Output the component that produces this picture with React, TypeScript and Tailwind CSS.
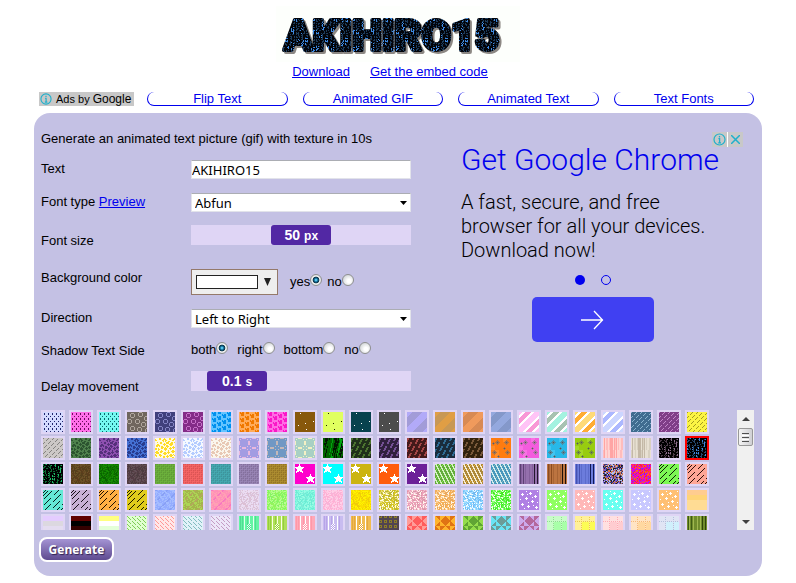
import React, { useState } from "react";
import clsx from "clsx";

type PixelFn = (x: number, y: number) => number;

// stable pseudo random value between 0 and 1
const noise = (x: number, y: number, seed = 1) => {
  const n = Math.sin(x * 127.1 + y * 311.7 + seed * 74.7) * 43758.5453;
  return n - Math.floor(n);
};

const mod = (a: number, b: number) => ((a % b) + b) % b;

const near = (points: number[][], x: number, y: number, test: (dx: number, dy: number) => boolean) =>
  points.some(([px, py]) => test(Math.abs(x - px), Math.abs(y - py)));

const RINGS = [[5, 3], [13, 2], [19, 6], [2, 9], [10, 9], [16, 12], [5, 16], [12, 17], [20, 18]];
const SPECKS = [[5, 1], [18, 9], [3, 13], [10, 11], [11, 17]];
const HOLES = [[6, 4, 2], [15, 4, 2], [2, 5, 1], [3, 14, 2], [13, 10, 1], [16, 14, 2], [7, 18, 1]];
const PLUSES = [[3, 4], [11, 3], [16, 6], [7, 8], [13, 11], [3, 14], [9, 16], [17, 17]];

const FLOWER = [
  "....##...#....##...#",
  "#...##..###...##..##",
  "##.....##.##.....##.",
  "........#.#..##.....",
  "..#..##....###..##.#",
  ".....##..#.###.###..",
  "..##....###...####..",
  ".####....#.##..##...",
  ".##.#.##...###....#.",
  "......###.#.#..#.###",
  "##.#..##.###..###.#.",
  "##.##....###...#....",
  "...#..#...#..#...##.",
  ".##..###.....#..####",
  "####.##..##.###..##.",
  ".###....####.#......",
  "#...##...##....##.#.",
  "##..###.....#.####.#",
  ".#...#..##.###.##...",
  "........##..#....##.",
];

const MATRIX = [
  "#.##..#.....#.......",
  "#......##..##....##.",
  ".##..#.#....#..#....",
  "##....##.......#.#..",
  "#..##..#..#.#..#.##.",
  "........#.#....###..",
  "#.#.....#....#...#..",
  "###..#.##.##.....#..",
  "#.#...#.......#.##..",
  "..#..##...##........",
  "#..#..#....#..##..#.",
  "##.#.##..#.....#..#.",
  "......#..###..##....",
  "#.#..##........#..#.",
  "#..#...#.#.#.....##.",
  "##....##.###..#.....",
  "......#....#..##..#.",
  "#.##.#.#.#....#..##.",
  "..#...#..##..##.....",
  "#....##...#...#..#..",
];

const STAR = [
  "....#....",
  "....#....",
  "...###...",
  "#########",
  ".#######.",
  "..#####..",
  "..#####..",
  ".###.###.",
  ".#.....#.",
];

const starAt = (x: number, y: number) => STAR[y]?.[x] === "#";

const PATTERNS: Record<string, PixelFn> = {
  dots: (x, y) => {
    const row = y % 5;
    if (row === 1 || row === 2) return x % 4 === 1 ? 1 : 0;
    return row === 4 && x % 4 === 3 ? 1 : 0;
  },
  rings: (x, y) => (near(RINGS, x, y, (dx, dy) => (dx === 2 && dy < 2) || (dy === 2 && dx < 2)) ? 1 : 0),
  blocks: (x, y) => {
    const col = Math.floor(x / 5);
    const row = mod(y + col * 2, 6);
    return row < 4 && x % 5 > 1 ? (row === 0 && x % 5 === 2 ? 0 : 1) : x % 5 === 1 && row < 2 ? 1 : 0;
  },
  specks: (x, y) => (near(SPECKS, x, y, (dx, dy) => dx + dy === 0) ? 1 : 0),
  bands: (x, y) => (mod(x + y + 5, 20) < 10 ? 0 : 1),
  candy: (x, y) => {
    const d = mod(x + y + 2, 20);
    return d < 5 ? 0 : d < 8 ? 2 : d < 14 ? 1 : d < 17 ? 2 : 0;
  },
  dashes: (x, y) => (mod(x + y, 5) === 0 && mod(x - y, 8) < 6 ? 1 : 0),
  flowers: (x, y) => (FLOWER[y][x] === "#" ? 1 : 0),
  circles: (x, y) => {
    const dx = mod(x, 10) - 4.5;
    const dy = mod(y, 10) - 4.5;
    const d = Math.sqrt(dx * dx + dy * dy);
    return d > 4.4 && d < 5.1 ? 1 : 0;
  },
  grass: (x, y) => {
    const n = noise(x + Math.floor(y / 5), Math.floor((y + x * 3) / 5));
    return n > 0.8 ? 2 : n > 0.35 ? 1 : 0;
  },
  bamboo: (x, y) => {
    const d = x + Math.floor(y / 2);
    return mod(d, 5) < 2 && mod(y + Math.floor(d / 5) * 3, 7) < 5 ? 1 : 0;
  },
  holes: (x, y) => {
    const hit = HOLES.find(([hx, hy, r]) => Math.abs(x - hx) + Math.abs(y - hy) <= r);
    if (!hit) return noise(Math.floor(x / 4), Math.floor(y / 4)) > 0.7 ? 3 : 0;
    return x === hit[0] && y === hit[1] ? 2 : 1;
  },
  curtain: (x, y) => (noise(x, 3) > 0.72 ? 1 : noise(x, Math.floor(y / 12)) > 0.5 ? 2 : 0),
  matrix: (x, y) => (MATRIX[y][x] === "#" ? (noise(x, Math.floor(y / 4)) > 0.7 ? 2 : 1) : 0),
  grain: (x, y) => Math.floor(noise(x, y) * 4),
  weave: (x, y) => ((x + y) % 2 === 0 && y % 2 === 0 ? 1 : (x + y) % 4 === 1 ? 2 : 0),
  stars: (x, y) => (starAt(x, y) || starAt(x - 11, y - 10) ? 1 : 0),
  mesh: (x, y) => {
    const d = mod(x * 2 - y, 8);
    return mod(y, 5) === 4 && d > 4 ? 0 : d < 3 ? 1 : d === 5 && mod(y, 4) < 2 ? 2 : 0;
  },
  bars: (x) => {
    if ([15, 18].includes(x)) return 2;
    return [1, 4].includes(x) ? 1 : [2, 6, 10, 13].includes(x) ? 3 : 0;
  },
  confetti: (x, y) => Math.floor(noise(x, y, 5) * 5),
  slashes: (x, y) => {
    const d = x + y;
    if (d < 6) return d % 3 === 2 && x < 5 ? 1 : 0;
    if (d > 35) return d % 2 ? 1 : 0;
    const k = Math.floor(d / 6);
    return d % 6 === 3 && mod(x - y + k * 7, 20) < 15 ? 1 : 0;
  },
  brush: (x, y) => {
    const d = mod(x - y + Math.floor(noise(y, 2) * 3), 9);
    const e = mod(x + y, 11);
    return d < 2 ? 1 : e < 2 ? 2 : noise(x, y) > 0.7 ? 1 : 0;
  },
  speckle: (x, y) => {
    const n = noise(x, y, 3);
    return n > 0.78 ? 3 : n > 0.5 ? 2 : n > 0.3 ? 1 : 0;
  },
  pluses: (x, y) => {
    if (near(PLUSES, x, y, (dx, dy) => dx + dy <= 1)) return 1;
    return near([[7, 1], [1, 9], [9, 12], [18, 1], [18, 12], [13, 7], [5, 18], [14, 15], [8, 4]], x, y, (dx, dy) => dx === dy && dx < 1) ? 1 : 0;
  },
  layers: (_x, y) => Math.min(Math.floor(y / 5), 2),
  stitch: (x, y) => (mod(x - y, 4) === 0 && mod(x, 5) !== 4 ? 1 : 0),
  ribbons: (x, y) => {
    if (y > 7 && x > 7 && x < 12) return (x + y) % 2 ? 1 : 2;
    return [5, 10, 14].includes(x) ? 1 : [1, 3, 8, 16].includes(x) ? 2 : 0;
  },
  lace: (x, y) => ((x * x + y * y + x * 3) % 5 < 2 ? 1 : 0),
  pinwheel: (x, y) => {
    const px = x % 10;
    const py = y % 10;
    const flip = (Math.floor(x / 10) + Math.floor(y / 10)) % 2;
    return (px > py ? 1 : 0) ^ (px + py > 9 ? 1 : 0) ^ flip ^ (px > 4 ? 1 : 0);
  },
  plaid: (x, y) => {
    if (x === 6 || x === 14 || y === 5) return (x + y) % 2 ? 2 : 0;
    return x > 6 && y > 5 ? 1 : 0;
  },
};

type Texture = [kind: string, ...colors: string[]];

const TEXTURES: Texture[] = [
  ["dots", "#d4daff", "#20246c"],
  ["dots", "#ff6fe9", "#6c0c5c"],
  ["dots", "#74f8f0", "#08686c"],
  ["rings", "#70665e", "#b0a69e"],
  ["rings", "#40407c", "#8484c4"],
  ["rings", "#842c88", "#c670c8"],
  ["blocks", "#64c4ff", "#0090ee"],
  ["blocks", "#ffac5c", "#f07800"],
  ["blocks", "#ff6ce4", "#fa18c8"],
  ["specks", "#88580c", "#ffffff"],
  ["specks", "#e0ff60", "#202000"],
  ["specks", "#08424e", "#ffffff"],
  ["specks", "#4c4c4c", "#ffffff"],
  ["bands", "#b2aaf8", "#a29cd8"],
  ["bands", "#e09e44", "#c89854"],
  ["bands", "#f09a5c", "#d88a54"],
  ["bands", "#94a8de", "#8498ca"],
  ["candy", "#ffc4f6", "#f898d6", "#ffffff"],
  ["candy", "#a4f2e0", "#a8c2b2", "#ffffff"],
  ["candy", "#ffda78", "#ffac34", "#ffffff"],
  ["candy", "#ccd6ff", "#acb8ff", "#ffffff"],
  ["dashes", "#406c90", "#8cb4d0"],
  ["dashes", "#803e88", "#c486ca"],
  ["dashes", "#fcf444", "#a49c20"],

  ["dashes", "#ccc8c6", "#848280"],
  ["flowers", "#4e804c", "#2c5430"],
  ["flowers", "#8e50b0", "#54307a"],
  ["flowers", "#4470d4", "#283c90"],
  ["flowers", "#fffae0", "#ffdc24"],
  ["flowers", "#f4f8ff", "#b4ccff"],
  ["flowers", "#faf6ec", "#e8c8b4"],
  ["circles", "#a29ce2", "#eab8de"],
  ["circles", "#7098c4", "#c4b8b8"],
  ["circles", "#a8d0c4", "#f4f0c4"],
  ["grass", "#021602", "#006400", "#00a410"],
  ["bamboo", "#20301a", "#4c7430"],
  ["bamboo", "#30203e", "#745094"],
  ["bamboo", "#441a1a", "#a44646"],
  ["bamboo", "#1a2c3c", "#306c94"],
  ["bamboo", "#32220e", "#78583a"],
  ["holes", "#ff7c10", "#a8744c", "#5c5c64", "#ff8c28"],
  ["holes", "#f45cde", "#b070a4", "#54545c", "#fa70e4"],
  ["holes", "#28b8e8", "#508ca0", "#54545c", "#40c4f0"],
  ["holes", "#98cc10", "#789838", "#54545c", "#a4d828"],
  ["curtain", "#ffd4d2", "#ffa4a4", "#ffbcbc"],
  ["curtain", "#e8e0d2", "#c4b8a6", "#d8d0c0"],
  ["matrix", "#000000", "#4c3c48", "#8c6c8c"],
  ["matrix", "#000000", "#24486c", "#3c84dc"],

  ["matrix", "#000000", "#0c6c34", "#20b468"],
  ["grain", "#644a22", "#54401c", "#6c5228", "#5c3c1c"],
  ["grain", "#108000", "#107000", "#188c04", "#086400"],
  ["grain", "#5c484c", "#4c3c40", "#645058", "#543c44"],
  ["weave", "#6cb03c", "#609c34", "#64a438"],
  ["weave", "#f46464", "#dc5454", "#e85c5c"],
  ["weave", "#44a8b0", "#3c949c", "#409ca4"],
  ["weave", "#9884b4", "#84709c", "#8c78a8"],
  ["weave", "#ac8c30", "#947424", "#a0802c"],
  ["stars", "#ff00cc", "#ffffff"],
  ["stars", "#00ffff", "#ffffff"],
  ["stars", "#ccb410", "#ffffff"],
  ["stars", "#ff5c0c", "#ffffff"],
  ["stars", "#6c2098", "#ffffff"],
  ["mesh", "#64ac3c", "#d4f4c0", "#84ec4c"],
  ["mesh", "#ac8838", "#f8ecd0", "#ecb040"],
  ["mesh", "#4898bc", "#d4ecec", "#88b4bc"],
  ["bars", "#9470ac", "#5c4074", "#241830", "#84609c"],
  ["bars", "#bc7440", "#8c4c20", "#201008", "#a86434"],
  ["bars", "#6c7cdc", "#4450b0", "#101858", "#5c6ccc"],
  ["confetti", "#383878", "#d87848", "#7858d0", "#b8c0e0", "#202020"],
  ["confetti", "#ff1090", "#ff6020", "#e000e0", "#ff2040", "#9020ff"],
  ["slashes", "#7cf854", "#102008"],
  ["slashes", "#ffa696", "#301008"],

  ["slashes", "#64ead6", "#08201c"],
  ["slashes", "#c8b0d4", "#181018"],
  ["slashes", "#ffb044", "#201000"],
  ["slashes", "#e0cc1c", "#1c1800"],
  ["brush", "#94acff", "#a4bcff", "#88a0f4"],
  ["brush", "#a4b44c", "#acd454", "#b4a85c"],
  ["brush", "#ff90b8", "#ffa0b4", "#f878c0"],
  ["grain", "#e8daec", "#dcc4dc", "#ecdcf4", "#dcc0d4"],
  ["grain", "#a4fc74", "#84f464", "#b8fc94", "#94f45c"],
  ["grain", "#80f8e0", "#6cecd4", "#98fce4", "#7cecd8"],
  ["grain", "#ffc4e0", "#ffb0d4", "#ffd0e8", "#f8b4d8"],
  ["grain", "#fff400", "#f8e400", "#fcdc00", "#f0cc08"],
  ["speckle", "#d4c424", "#b8b438", "#e8dc70", "#fffae0"],
  ["speckle", "#eca0b8", "#d898a8", "#f4c0d0", "#fff4ec"],
  ["speckle", "#f4b058", "#e8a860", "#fccc90", "#fff4e0"],
  ["speckle", "#84d0ff", "#70b8f0", "#a8e0ff", "#f0faff"],
  ["speckle", "#58f440", "#40e820", "#90fc78", "#ecffe4"],
  ["pluses", "#b080e4", "#ffffff"],
  ["pluses", "#90ff60", "#ffffff"],
  ["pluses", "#ffb8b8", "#ffffff"],
  ["pluses", "#68fff0", "#ffffff"],
  ["pluses", "#c8c8ff", "#ffffff"],
  ["pluses", "#ffc074", "#ffffff"],
  ["layers", "#ffcc90", "#ffd478", "#ffdc94"],

  ["layers", "#e4ccff", "#dcd8e0", "#e4dcf0"],
  ["layers", "#600000", "#000000", "#340000"],
  ["layers", "#ffff80", "#ffffff", "#e4ffd8"],
  ["stitch", "#e0ffd0", "#80cc58"],
  ["stitch", "#ffe8e8", "#ff9898"],
  ["stitch", "#e0f2f8", "#84bcc0"],
  ["stitch", "#ece6f8", "#c49cc4"],
  ["ribbons", "#64f4a4", "#e0fff0", "#50dc94"],
  ["ribbons", "#b0e058", "#f8ffe0", "#94cc40"],
  ["ribbons", "#ffa8b8", "#ffffff", "#ff98a8"],
  ["ribbons", "#c8bcf0", "#ffffff", "#b8a4e8"],
  ["ribbons", "#f0bc50", "#ffffff", "#e4a840"],
  ["lace", "#504450", "#8c7c28"],
  ["pinwheel", "#ff9c98", "#ff5c5c"],
  ["pinwheel", "#ffb42c", "#e07414"],
  ["pinwheel", "#94dc4c", "#60a434"],
  ["pinwheel", "#68e4f4", "#6c9c98"],
  ["pinwheel", "#ccaaec", "#b4689c"],
  ["plaid", "#c8fcc8", "#a8ffa8", "#90dc90"],
  ["plaid", "#fff098", "#fcfc54", "#ecc850"],
  ["plaid", "#ffe0e0", "#ffccd0", "#ffaab4"],
  ["plaid", "#ffe4c4", "#ffd8a0", "#f8b878"],
  ["plaid", "#e0e4f4", "#d0f0fc", "#b4c0dc"],
  ["bars", "#708c2c", "#405c14", "#304408", "#a0b850"],
];

function TextureIcon({ texture }: { texture: Texture }) {
  const [kind, ...colors] = texture;
  const paths = colors.map(() => "");
  for (let y = 0; y < 20; y++) {
    for (let x = 0; x < 20; x++) {
      const c = PATTERNS[kind](x, y) % colors.length;
      if (c > 0) paths[c] += `M${x} ${y}h1v1h-1z`;
    }
  }
  return (
    <svg className="block size-5" viewBox="0 0 20 20" shapeRendering="crispEdges" aria-hidden>
      <rect width="20" height="20" fill={colors[0]} />
      {paths.map((d, i) => d && <path key={i} d={d} fill={colors[i]} />)}
    </svg>
  );
}

function Logo() {
  let dim = "";
  let bright = "";
  for (let y = 0; y < 40; y++) {
    for (let x = 0; x < 40; x++) {
      if (MATRIX[y % 20][x % 20] !== "#") continue;
      if (noise(Math.floor(x / 3), Math.floor(y / 4), 9) > 0.75) bright += `M${x} ${y}h1v1h-1z`;
      else dim += `M${x} ${y}h1v1h-1z`;
    }
  }
  return (
    <svg className="block h-14 w-[244px] bg-[#fdfffc]" viewBox="0 0 244 56" role="img" aria-label="AKIHIRO15">
      <defs>
        <pattern id="matrix" width="40" height="40" patternUnits="userSpaceOnUse">
          <rect width="40" height="40" fill="#02040a" />
          <path d={dim} fill="#1c3c5c" />
          <path d={bright} fill="#3c88e0" />
        </pattern>
      </defs>
      <text
        x="8"
        y="44"
        fontSize="42"
        strokeWidth="4"
        strokeLinejoin="round"
        fill="url(#matrix)"
        stroke="url(#matrix)"
        className="font-['Roboto',sans-serif] font-black drop-shadow-[2px_2px_0px_#8c8884]"
      >
        AKIHIRO15
      </text>
    </svg>
  );
}

function InfoIcon({ className }: { className?: string }) {
  return (
    <svg className={className} viewBox="0 0 13 13" fill="none" stroke="#1fb0cc" aria-hidden>
      <circle cx="6.5" cy="6.5" r="5.5" strokeWidth="1.2" />
      <path d="M6.5 3v1.4M5.4 5.7h1.2v4M5.2 9.8h2.8" strokeWidth="1.3" />
    </svg>
  );
}

function Row({ label, htmlFor, className, labelClass = "pt-px", children }: {
  label: React.ReactNode;
  htmlFor?: string;
  className: string;
  labelClass?: string;
  children: React.ReactNode;
}) {
  return (
    <div className={clsx("flex items-start", className)}>
      <div className={clsx("w-[150px] shrink-0", labelClass)}>
        {htmlFor ? <label htmlFor={htmlFor}>{label}</label> : label}
      </div>
      <div className="min-w-0 flex-1">{children}</div>
    </div>
  );
}

function Select({ id, options }: { id: string; options: string[] }) {
  return (
    <div className="relative">
      <select
        id={id}
        className="block h-[19px] w-full appearance-none border border-[#e2e3ea] border-t-[#abadb3] bg-white pl-[3px] font-['Noto_Sans'] text-[13px] leading-4 text-black"
      >
        {options.map((o) => <option key={o}>{o}</option>)}
      </select>
      <svg className="pointer-events-none absolute top-2 right-1 h-1 w-[7px]" viewBox="0 0 7 4" aria-hidden>
        <path d="M0 0h7L3.500 4z" fill="#000" />
      </svg>
    </div>
  );
}

function Slider({ id, max, step, initial, unit }: { id: string; max: number; step: number; initial: number; unit: string }) {
  const [value, setValue] = useState(initial);
  return (
    <div className="relative h-5 bg-[#dfd5f5]">
      <div
        className="absolute top-0 flex h-5 w-[60px] items-baseline justify-center gap-1 rounded-[3px] bg-[#5228a4] text-sm leading-5 font-bold text-white"
        style={{ left: `${(value / max) * 73}%` }}
      >
        {value}<span className="text-xs">{unit}</span>
      </div>
      <input
        id={id}
        type="range"
        min={0}
        max={max}
        step={step}
        value={value}
        onChange={(e) => setValue(Number(e.target.value))}
        className="absolute inset-0 h-full w-full cursor-pointer opacity-0"
      />
    </div>
  );
}

function Radio({ name, label, defaultChecked }: { name: string; label: string; defaultChecked?: boolean }) {
  return (
    <label className="flex items-center">
      {label}
      <input
        type="radio"
        name={name}
        defaultChecked={defaultChecked}
        className="mb-1 size-3 appearance-none rounded-full border border-[#8e8f8f] bg-[radial-gradient(circle_at_60%_60%,#ffffff_20%,#d0d4d6_80%)] checked:bg-[radial-gradient(circle,#5cd0f4_8%,#0b5c86_28%,#10303f_44%,#f4f4f4_52%,#d8dcde_80%)]"
      />
    </label>
  );
}

const TABS = ["Flip Text", "Animated GIF", "Animated Text", "Text Fonts"];

export default function App() {
  const [selected, setSelected] = useState(47);

  return (
    <main className="min-h-screen bg-white pt-1.5 font-['Liberation_Sans',Arial,sans-serif] text-[13px] leading-4 text-black">
      <header className="flex flex-col items-center">
        <Logo />
        <nav className="mt-0.5 flex gap-5 pr-4 text-[#0000ee] underline">
          <a href="#download">Download</a>
          <a href="#embed">Get the embed code</a>
        </nav>
      </header>

      <div className="mx-auto max-w-[728px]">
        <nav className="mt-3 flex items-center gap-[15px] pr-2 pl-[5px]">
          <a href="#ads" className="-mr-0.5 flex h-3.5 w-[95px] shrink-0 items-center gap-1 bg-[#c8c8c8] text-[11px]">
            <InfoIcon className="ml-px size-3" />
            <span>Ads by <span className="text-xs">Google</span></span>
          </a>
          {TABS.map((tab) => (
            <a
              key={tab}
              href="#"
              className="h-3.5 flex-1 rounded-[7px] border border-t-0 border-[#0000ee] text-center leading-3.5 text-[#0000ee]"
            >
              {tab}
            </a>
          ))}
        </nav>

        <section className="mt-[7px] rounded-[16px] bg-[#c4c1e4] px-[7px] pb-[14px]">
          <div className="flex">
            <form className="w-[370px] pt-[18px]">
              <p className="mb-[13px]">Generate an animated text picture (gif) with texture in 10s</p>

              <Row label="Text" htmlFor="text" className="h-[33px]">
                <input
                  id="text"
                  type="text"
                  defaultValue="AKIHIRO15"
                  className="block h-[19px] w-full border border-[#e2e3ea] border-t-[#abadb3] bg-white font-['Noto_Sans'] text-[13px]"
                />
              </Row>
              <Row
                label={<><label htmlFor="font">Font type</label> <a href="#preview" className="text-[#0000ee] underline">Preview</a></>}
                className="h-8"
              >
                <Select id="font" options={["Abfun", "Arial"]} />
              </Row>
              <Row label="Font size" htmlFor="size" className="h-11" labelClass="pt-2">
                <Slider id="size" max={100} step={1} initial={50} unit="px" />
              </Row>
              <Row label="Background color" className="h-10">
                <div className="flex items-center">
                  <button type="button" aria-label="Background color" className="flex h-[26px] w-[87px] items-center gap-1.5 border border-[#94796a] bg-[#eeeeee] pl-1">
                    <span className="h-3.5 w-[62px] border border-[#222] bg-white" />
                    <svg className="h-2 w-[7px]" viewBox="0 0 7 8" aria-hidden>
                      <path d="M0 0h7L3.500 8z" fill="#222" />
                    </svg>
                  </button>
                  <div className="ml-3 flex gap-[5px]">
                    <Radio name="bg" label="yes" defaultChecked />
                    <Radio name="bg" label="no" />
                  </div>
                </div>
              </Row>
              <Row label="Direction" htmlFor="direction" className="h-[33px]">
                <Select id="direction" options={["Left to Right", "Right to Left"]} />
              </Row>
              <Row label="Shadow Text Side" className="h-[29px]">
                <div className="flex gap-[9px]">
                  <Radio name="shadow" label="both" defaultChecked />
                  <Radio name="shadow" label="right" />
                  <Radio name="shadow" label="bottom" />
                  <Radio name="shadow" label="no" />
                </div>
              </Row>
              <Row label="Delay movement" htmlFor="delay" className="h-[39px]" labelClass="pt-2">
                <Slider id="delay" max={1} step={0.1} initial={0.1} unit="s" />
              </Row>
            </form>

            <aside className="relative ml-[50px] w-[264px] pt-[29px] font-['Roboto'] font-light">
              <div className="absolute top-[19px] -right-[18px] flex h-[15px] gap-px bg-white">
                <button type="button" aria-label="Ad info" className="flex w-[15px] items-center justify-center bg-[#c8c8c8]">
                  <InfoIcon className="size-[13px]" />
                </button>
                <button type="button" aria-label="Close ad" className="flex w-[15px] items-center justify-center bg-[#c8c8c8]">
                  <svg className="size-[9px]" viewBox="0 0 9 9" stroke="#1fb0cc" strokeWidth="1.5" aria-hidden>
                    <path d="M0 0l9 9M9 0L0 9" />
                  </svg>
                </button>
              </div>
              <h2 className="text-[30px] leading-9 whitespace-nowrap text-[#0000ee]">Get Google Chrome</h2>
              <p className="mt-3 text-xl leading-6">A fast, secure, and free browser for all your devices. Download now!</p>
              <div className="mt-[13px] flex justify-center gap-4">
                <span className="size-2.5 rounded-full bg-[#0000ee]" />
                <span className="size-2.5 rounded-full border border-[#0000ee]" />
              </div>
              <button type="button" aria-label="Next" className="mx-auto mt-3 flex h-[45px] w-[122px] items-center justify-center rounded-[5px] bg-[#4040f2]">
                <svg className="h-5 w-6" viewBox="0 0 24 20" fill="none" stroke="#fff" strokeWidth="1.3" aria-hidden>
                  <path d="M0 10h22M13 1l8.500 9-8.500 9" />
                </svg>
              </button>
            </aside>
          </div>

          <div className="flex h-[120px] justify-between overflow-hidden pr-px">
            <div className="grid grid-cols-[repeat(24,24px)] content-start gap-x-1 gap-y-0.5">
              {TEXTURES.map((texture, i) => (
                <button
                  key={i}
                  type="button"
                  aria-label={`Texture ${i + 1}`}
                  onClick={() => setSelected(i)}
                  className={clsx("size-6 border-2", i === selected ? "border-[#ff0000]" : "border-[#dfd5f5]")}
                >
                  <TextureIcon texture={texture} />
                </button>
              ))}
            </div>
            <div className="flex w-[17px] flex-col items-center bg-[#f0f0f0]">
              <svg className="h-[18px] w-[17px]" viewBox="0 0 17 18" aria-hidden>
                <path d="M5 11l4-4 4 4z" fill="#404040" />
              </svg>
              <div className="flex h-[18px] w-[15px] flex-col items-center justify-center gap-px rounded-xs border border-[#989898] bg-linear-to-r from-[#f4f4f4] to-[#d0d0d4]">
                <span className="h-px w-[7px] bg-[#505050]" />
                <span className="h-px w-[7px] bg-white" />
                <span className="h-px w-[7px] bg-[#505050]" />
                <span className="h-px w-[7px] bg-white" />
                <span className="h-px w-[7px] bg-[#505050]" />
              </div>
              <svg className="mt-auto h-[18px] w-[17px]" viewBox="0 0 17 18" aria-hidden>
                <path d="M5 8l4 4 4-4z" fill="#404040" />
              </svg>
            </div>
          </div>

          <button
            type="button"
            className="mt-[7px] -ml-0.5 block h-[25px] w-[75px] rounded-[8px] border-2 border-white bg-linear-to-b from-[#a594d4] to-[#5f4b90] font-['Open_Sans'] text-xs leading-5 font-bold text-white [text-shadow:1px_1px_1px_#302050]"
          >
            Generate
          </button>
        </section>
      </div>
    </main>
  );
}
